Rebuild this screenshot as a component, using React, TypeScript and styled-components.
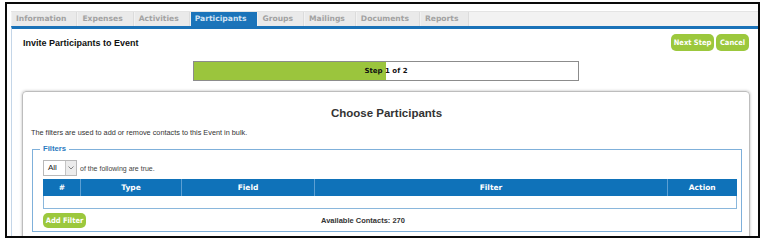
import React from 'react';
import styled, { createGlobalStyle } from 'styled-components';

const GlobalStyle = createGlobalStyle`
  body {
    margin: 0;
    background: #ffffff;
    font-family: 'Liberation Sans', Arial, sans-serif;
  }
`;

const Frame = styled.div`
  margin: 2px 0 0 5px;
  width: 755px;
  height: 236px;
  box-sizing: border-box;
  border: 2px solid #0a0a0a;
  padding-left: 4px;
  overflow: hidden;
  background: #fff;
`;

const TabRow = styled.div`
  display: flex;
  margin-top: 7px;
  height: 15px;
  padding-left: 1px;
  background: #f2f2f2;
  border-top: 1px solid #e4e4e4;
  box-sizing: border-box;
`;

const Tab = styled.div<{ $active?: boolean }>`
  height: 14px;
  line-height: 14px;
  padding: 0 10px 0 4px;
  margin-right: 1px;
  font-family: 'DejaVu Sans', Verdana, sans-serif;
  font-weight: bold;
  font-size: 7.6px;
  color: ${(p) => (p.$active ? '#cfe2f3' : '#a2a2a2')};
  background: ${(p) => (p.$active ? '#1b74ba' : '#eaeaea')};
  border-right: 1px solid ${(p) => (p.$active ? '#1b74ba' : '#dcdcdc')};
`;

const Panel = styled.div`
  border-top: 3px solid #1a72b8;
  border-left: 1px solid #c4d6e8;
  padding: 5px 8px 0 10px;
`;

const HeaderRow = styled.div`
  display: flex;
  justify-content: space-between;
  align-items: center;
  height: 17px;
`;

const PageTitle = styled.div`
  font-weight: bold;
  font-size: 9px;
  color: #111;
  padding-left: 1px;
`;

const Buttons = styled.div`
  display: flex;
  gap: 2px;
  margin-right: 1px;
`;

const GreenButton = styled.div<{ $w: number; $h: number }>`
  width: ${(p) => p.$w}px;
  height: ${(p) => p.$h}px;
  line-height: ${(p) => p.$h}px;
  text-align: center;
  background: #9cc83d;
  border-radius: 5px;
  color: #fff;
  font-family: 'DejaVu Sans Condensed', 'DejaVu Sans', sans-serif;
  font-weight: bold;
  font-size: 7.5px;
`;

const Progress = styled.div`
  display: grid;
  width: 386px;
  height: 20px;
  margin: 10px auto 0;
  box-sizing: border-box;
  border: 1px solid #8c8c8c;
  background: #fff;
  > * {
    grid-area: 1 / 1;
  }
`;

const ProgressFill = styled.div`
  background: #9bc53d;
`;

const ProgressLabel = styled.div`
  align-self: center;
  text-align: center;
  font-family: 'DejaVu Sans', Verdana, sans-serif;
  font-weight: bold;
  font-size: 7px;
  color: #111;
`;

const Card = styled.div`
  margin-top: 10px;
  height: 200px;
  border: 1px solid #bdbdbd;
  border-radius: 4px;
  box-shadow: 0 0 3px rgba(0, 0, 0, 0.28);
  padding: 0 7px 0 8px;
`;

const CardTitle = styled.div`
  margin-top: 14px;
  text-align: center;
  font-weight: bold;
  font-size: 11.5px;
  line-height: 14px;
  color: #333;
`;

const Description = styled.div`
  margin-top: 8px;
  font-size: 7.3px;
  line-height: 9px;
  color: #333;
`;

const Fieldset = styled.fieldset`
  margin: 7px 0 0 1px;
  padding: 6px 5px 3px 10px;
  border: 1px solid #7fb0da;
  min-width: 0;
`;

const Legend = styled.legend`
  margin-left: -3px;
  padding: 0 3px;
  font-weight: bold;
  font-size: 7.7px;
  line-height: 10px;
  color: #2a7ac0;
`;

const MatchRow = styled.div`
  display: flex;
  align-items: center;
  gap: 3px;
  font-size: 7px;
  color: #444;
`;

const FakeSelect = styled.div`
  display: flex;
  width: 34px;
  height: 16px;
  box-sizing: border-box;
  border: 1px solid #b9b9b9;
  background: #fff;
`;

const SelectValue = styled.div`
  flex: 1;
  padding-left: 4px;
  line-height: 14px;
  font-size: 8px;
  color: #222;
`;

const SelectArrow = styled.div`
  width: 10px;
  display: flex;
  align-items: center;
  justify-content: center;
  background: #ececec;
  border-left: 1px solid #c4c4c4;
`;

const Table = styled.table`
  margin-top: 3px;
  width: 693px;
  border-collapse: collapse;
  table-layout: fixed;
`;

const Th = styled.th`
  height: 17px;
  padding: 0;
  background: #0f72b9;
  border-left: 1px solid #5c9fd3;
  color: #fff;
  font-family: 'DejaVu Sans', Verdana, sans-serif;
  font-weight: bold;
  font-size: 7.5px;
  &:first-child {
    border-left: 1px solid #0f72b9;
  }
`;

const EmptyCell = styled.td`
  height: 12px;
  padding: 0;
  border: 1px solid #8ab7dc;
  border-top: none;
`;

const FooterRow = styled.div`
  display: grid;
  grid-template-columns: 278px 1fr;
  align-items: center;
  margin-top: 4px;
`;

const Available = styled.div`
  font-weight: bold;
  font-size: 7.5px;
  color: #333;
`;

const tabs = ['Information', 'Expenses', 'Activities', 'Participants', 'Groups', 'Mailings', 'Documents', 'Reports'];
const columns: [string, number][] = [
  ['#', 37],
  ['Type', 101],
  ['Field', 133],
  ['Filter', 353],
  ['Action', 69],
];

export default function App() {
  const step = 1;
  const total = 2;
  return (
    <>
      <GlobalStyle />
      <Frame>
        <TabRow>
          {tabs.map((t) => (
            <Tab key={t} $active={t === 'Participants'}>
              {t}
            </Tab>
          ))}
        </TabRow>
        <Panel>
          <HeaderRow>
            <PageTitle>Invite Participants to Event</PageTitle>
            <Buttons>
              <GreenButton $w={43} $h={17}>Next Step</GreenButton>
              <GreenButton $w={33} $h={17}>Cancel</GreenButton>
            </Buttons>
          </HeaderRow>
          <Progress>
            <ProgressFill style={{ width: `${(step / total) * 100}%` }} />
            <ProgressLabel>
              Step {step} of {total}
            </ProgressLabel>
          </Progress>
          <Card>
            <CardTitle>Choose Participants</CardTitle>
            <Description>The filters are used to add or remove contacts to this Event in bulk.</Description>
            <Fieldset>
              <Legend>Filters</Legend>
              <MatchRow>
                <FakeSelect>
                  <SelectValue>All</SelectValue>
                  <SelectArrow>
                    <svg width="6" height="4" viewBox="0 0 6 4">
                      <path d="M0.5 0.5 L3 3 L5.5 0.5" fill="none" stroke="#777" strokeWidth="0.9" />
                    </svg>
                  </SelectArrow>
                </FakeSelect>
                of the following are true.
              </MatchRow>
              <Table>
                <colgroup>
                  {columns.map(([c, w]) => (
                    <col key={c} style={{ width: w }} />
                  ))}
                </colgroup>
                <thead>
                  <tr>
                    {columns.map(([c]) => (
                      <Th key={c}>{c}</Th>
                    ))}
                  </tr>
                </thead>
                <tbody>
                  <tr>
                    <EmptyCell colSpan={5} />
                  </tr>
                </tbody>
              </Table>
              <FooterRow>
                <GreenButton $w={43} $h={15}>Add Filter</GreenButton>
                <Available>Available Contacts: 270</Available>
              </FooterRow>
            </Fieldset>
          </Card>
        </Panel>
      </Frame>
    </>
  );
}
